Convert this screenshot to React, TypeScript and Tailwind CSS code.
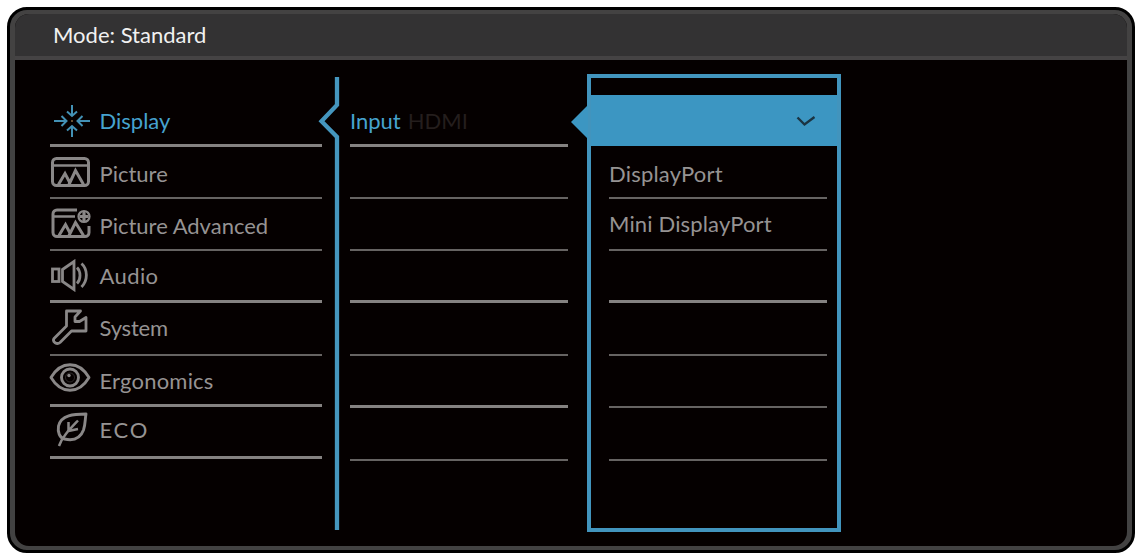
import type { ReactNode } from "react";

const thick = "border-b-[3px] border-[#858281]";
const thin = "border-b-2 border-[#666362]";

const DisplayIcon = () => (
  <svg width="36" height="32" viewBox="0 0 36 32" fill="none" stroke="#4391b5" strokeWidth="2">
    <path d="M18 0v10M13 6.500l5 4.500 5-4.500M18 32V22M13 25.500l5-4.500 5 4.500M0 16h12M7.500 11l5 5-5 5M36 16H24M28.500 11l-5 5 5 5" />
    <circle cx="18" cy="16" r="1" fill="#8a6a40" stroke="none" />
  </svg>
);

const PictureIcon = () => (
  <svg width="39" height="30" viewBox="0 0 39 30" fill="none" stroke="#8a8787" strokeWidth="3">
    <rect x="1.500" y="1.500" width="36" height="27" rx="4" />
    <path d="M2 8.500h35" strokeWidth="2.400" />
    <path d="M7.500 27.500l6.500-11 5 9.500M18 27.500l6.500-14 8 14" />
  </svg>
);

const PictureAdvancedIcon = () => (
  <svg width="40" height="31" viewBox="0 0 40 31" fill="none" stroke="#8a8787" strokeWidth="3">
    <path d="M26 2H6a4 4 0 0 0-4 4v18.500a4 4 0 0 0 4 4h28a4 4 0 0 0 4-4V18" />
    <path d="M2 8.500h22" strokeWidth="2.400" />
    <path d="M8 27.500l6.500-11 5 9.500M18 27.500l6.500-13 8 13" />
    <circle cx="33" cy="8.500" r="5.500" strokeWidth="2.200" />
    <path d="M33 4v9M28.500 8.500h9" strokeWidth="3.200" />
  </svg>
);

const AudioIcon = () => (
  <svg width="38" height="33" viewBox="0 0 38 33" fill="none" stroke="#8a8787" strokeWidth="2.800">
    <rect x="1.500" y="10" width="6.500" height="12.500" />
    <path d="M11.500 10.500L23 2.500v28l-11.500-8z" />
    <path d="M26 8.500c4 4 4 12 0 16M30.500 4.500c6.500 6 6.500 17 0 23.500" />
  </svg>
);

const SystemIcon = () => (
  <svg width="36" height="36" viewBox="0 0 36 36" fill="none" stroke="#8a8787" strokeWidth="2.800" strokeLinejoin="round">
    <path d="M14.500 2H28.500L23 8V12.500H27.500L34 8.500V22H19.500L8 33.500C5 36 0 33 2 29.500L14.500 17Z" />
  </svg>
);

const ErgonomicsIcon = () => (
  <svg width="42" height="29" viewBox="0 0 42 29" fill="none" stroke="#8a8787" strokeWidth="2.900">
    <path d="M2 14.500C12-2.500 30-2.500 40 14.500 30 31.500 12 31.500 2 14.500Z" strokeLinejoin="round" />
    <circle cx="21" cy="14.500" r="8.500" />
    <circle cx="21" cy="14.500" r="4.500" strokeWidth="1" opacity="0.3" />
    <circle cx="20" cy="12.500" r="1.700" fill="#8a8787" stroke="none" />
  </svg>
);

const EcoIcon = () => (
  <svg width="32" height="36" viewBox="0 0 32 36" fill="none" stroke="#8a8787" strokeWidth="2.900">
    <path d="M30 3C18 3 5 4 2.500 15c-1 6 1 12 6 13 9 2 16-1 19-9 2-6 1.500-11 2.500-16Z" strokeLinejoin="round" />
    <path d="M3 35C6 26 13 19 22 9.500M12.500 11v8l-1 2M22 18l-9.500 2" strokeWidth="2.500" />
  </svg>
);

type Item = { label: string; icon: ReactNode; row: string; text: string; slot: string };

const menu: Item[] = [
  { label: "Display", icon: <DisplayIcon />, row: `h-[52px] ${thick}`, text: "pb-[10px] text-[#46a3cf]", slot: "pl-[4px] pb-[7px]" },
  { label: "Picture", icon: <PictureIcon />, row: `h-[52px] ${thin}`, text: "pb-[10px]", slot: "pl-[1px] pb-[10px]" },
  { label: "Picture Advanced", icon: <PictureAdvancedIcon />, row: `h-[52px] ${thin}`, text: "pb-[10px]", slot: "pl-[1px] pb-[10px]" },
  { label: "Audio", icon: <AudioIcon />, row: `h-[52px] ${thick}`, text: "pb-[11px] tracking-[0.4px]", slot: "pl-[1px] pb-[8px]" },
  { label: "System", icon: <SystemIcon />, row: `h-[53px] ${thin}`, text: "pb-[13px] tracking-[-0.2px]", slot: "pl-[2px] pb-[9px]" },
  { label: "Ergonomics", icon: <ErgonomicsIcon />, row: `h-[51px] ${thick}`, text: "pb-[10px] tracking-[0.2px]", slot: "-ml-px mr-px pb-[12px]" },
  { label: "ECO", icon: <EcoIcon />, row: `h-[52px] ${thick}`, text: "pb-[13px] tracking-[1.7px]", slot: "pl-[6px] pb-[9px]" },
];

const inputRows = [
  `h-[52px] ${thin}`,
  `h-[52px] ${thin}`,
  `h-[52px] ${thick}`,
  `h-[53px] ${thin}`,
  `h-[52px] ${thick}`,
  `h-[53px] ${thin}`,
];

const options = [
  { label: "DisplayPort", row: `h-[53px] ${thin}`, text: "pb-[10px] tracking-[0.2px]" },
  { label: "Mini DisplayPort", row: `h-[52px] ${thin}`, text: "pb-[12px] tracking-[0.15px]" },
  { label: "", row: `h-[52px] ${thick}`, text: "" },
  { label: "", row: `h-[53px] ${thin}`, text: "" },
  { label: "", row: `h-[52px] ${thin}`, text: "" },
  { label: "", row: `h-[53px] ${thin}`, text: "" },
];

export default function App() {
  return (
    <div className="h-[554px] w-[1140px] overflow-hidden bg-white pt-[7px] pl-[7px] font-[Lato,sans-serif] text-[22px] leading-[26px] text-[#969393]">
      <div className="h-[546px] w-[1128px] rounded-[20px] border-[3px] border-black bg-[#434242] px-[5px] py-1">
        <div className="flex h-full flex-col overflow-hidden rounded-[14px] bg-[#050000]">
          <header className="flex h-[46px] shrink-0 items-center border-b-4 border-[#454344] bg-[#333233] pl-[38px] text-[#f1f1f1]">
            Mode: Standard
          </header>
          <main className="flex flex-1 pl-[35px]">
            <nav className="w-[272px] pt-[35px]">
              {menu.map((item) => (
                <div key={item.label} className={`flex items-end ${item.row}`}>
                  <span className={`w-[49.5px] shrink-0 ${item.slot}`}>{item.icon}</span>
                  <span className={`whitespace-nowrap ${item.text}`}>{item.label}</span>
                </div>
              ))}
            </nav>
            <svg className="-ml-1 shrink-0" width="32" height="486" viewBox="318 60 32 486" fill="none" stroke="#4596be">
              <path d="M337 77V105L321.500 121.300L337 137V530" strokeWidth="4.300" />
            </svg>
            <section className="w-[218px] pt-[35px]">
              <div className={`flex h-[52px] items-end ${thick}`}>
                <span className="pb-[10px] text-[#46a3cf]">Input</span>
                <span className="pb-[10px] pl-[7px] text-[#241e1d]">HDMI</span>
              </div>
              {inputRows.map((row, i) => (
                <div key={i} className={row} />
              ))}
            </section>
            <section className="relative mt-[14px] ml-[19px] h-[458px] w-[254px] border-4 border-[#4294bd]">
              <svg className="absolute top-[27px] -left-5" width="17" height="34" viewBox="0 0 17 34" fill="#3c96c2">
                <path d="M17 0L0 17L17 34Z" />
              </svg>
              <div className="mt-[17px] flex h-[51px] items-center justify-end bg-[#3c96c2] pr-5">
                <svg width="22" height="12" viewBox="0 0 22 12" fill="none" stroke="#1b3442" strokeWidth="2.400">
                  <path d="M2.500 2.500L9.500 9.500L19.500 2" />
                </svg>
              </div>
              <div className="ml-[18px] w-[218px]">
                {options.map((option, i) => (
                  <div key={i} className={`flex items-end ${option.row}`}>
                    <span className={option.text}>{option.label}</span>
                  </div>
                ))}
              </div>
            </section>
          </main>
        </div>
      </div>
    </div>
  );
}
